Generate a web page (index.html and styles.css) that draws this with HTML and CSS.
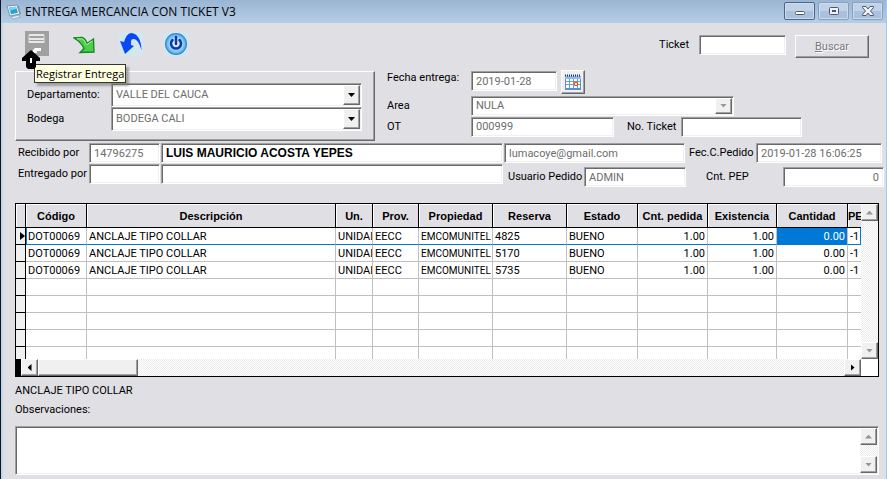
FILE: index.html
```html
<!DOCTYPE html>
<html lang="es">
<head>
<meta charset="utf-8">
<title>ENTREGA MERCANCIA CON TICKET V3</title>
<link rel="stylesheet" href="styles.css">
</head>
<body>
<div class="window">
  <header class="titlebar">
    <svg class="app-icon" width="16" height="16" viewBox="0 0 16 16"><path d="M1 2l10-1 3 9-10 2z" fill="#f4f9fc" stroke="#7894a5"/><path d="M3 3.500l7-.7 2 6-7 1.400z" fill="#24a1d8"/><path d="M3 3.500l7-.7.6 2-6.600 2z" fill="#79d4f2"/><path d="M5 13l8-2 1 2-7 2z" fill="#e9edf0" stroke="#7894a5" stroke-width=".6"/><path d="M11 1l2 1 2 8-1 1z" fill="#8097a6"/></svg>
    <h1 class="title">ENTREGA MERCANCIA CON TICKET V3</h1>
    <div class="caption-buttons">
      <button class="caption-button active" aria-label="Minimizar"><svg width="12" height="12" viewBox="0 0 12 12"><rect x="1.500" y="6.500" width="9" height="3" rx="1" fill="#fff" stroke="#535666"/></svg></button>
      <button class="caption-button" aria-label="Maximizar"><svg width="12" height="12" viewBox="0 0 12 12"><rect x="1.500" y="2.500" width="9" height="7" rx="1" fill="#eef2f6" stroke="#535666"/><rect x="4.500" y="5.500" width="3" height="1" fill="#b6cae0" stroke="#535666"/></svg></button>
      <button class="caption-button" aria-label="Cerrar"><svg width="12" height="12" viewBox="0 0 12 12"><path d="M.5 1.500h3.500l2 2.500 2-2.500h3.500v1L8.500 6l3 3.500v1H8L6 8l-2 2.500H.5v-1l3-3.500-3-3.500z" fill="#eef2f6" stroke="#535666"/></svg></button>
    </div>
  </header>

  <main class="content">
    <div class="toolbar">
      <div class="tools">
        <div class="tool-slot">
          <button class="tool" aria-label="Registrar Entrega"><svg width="24" height="25" viewBox="0 0 24 25"><path d="M0 0h24v25H0z" fill="#a0a0a0"/><path d="M4 4h15M4 8h15M4 11h15" stroke="#fff" stroke-width="1.500"/><path d="M4 4v8M19 4v8" stroke="#ddd"/><path d="M10 17h6v3h-4v2H8v-3z" fill="#fff"/></svg></button>
          <svg class="pointer" width="18" height="19" viewBox="0 0 18 19"><path d="M9 0l9 8v3h-4v6l-2 2H6l-2-2v-6H0V8z" fill="#000"/><path d="M8 8h2v5H8z" fill="#fff"/></svg>
          <span class="tooltip" role="tooltip">Registrar Entrega</span>
        </div>
        <button class="tool tool-next" aria-label="Continuar"><svg width="22" height="18" viewBox="0 0 22 18"><path d="M1 2l8-.5c3 .5 4 3 5 6l6.500-4.500.5 13-14 .500 4-4C9.500 9 6 5 1 2z" fill="#4ccf48" stroke="#108426" stroke-width="1.300"/><path d="M4 2.800h5c2.500.7 3 3.500 4.500 6l6-4" fill="none" stroke="#b6f5a0"/></svg></button>
        <button class="tool tool-undo" aria-label="Deshacer"><svg width="24" height="24" viewBox="0 0 24 24"><path d="M0 0h24v24H0z" fill="#d3e7ee"/><path d="M1 9l4 1C7 4 9 1 13 1c6 1 9.500 8 9.500 17-2-6-4-11-8-11-3 0-2.500 3-2.500 6l3 1-9 8z" fill="#0b48f5"/></svg></button>
        <button class="tool tool-power" aria-label="Salir"><svg width="24" height="24" viewBox="0 0 24 24"><defs><radialGradient id="orb"><stop offset="0" stop-color="#e5fbff"/><stop offset=".5" stop-color="#b1e3fa"/><stop offset=".8" stop-color="#69b9ef"/><stop offset="1" stop-color="#2277c8"/></radialGradient></defs><path d="M0 0h24v24H0z" fill="#d3e7ee"/><circle cx="12" cy="12" r="11" fill="url(#orb)"/><path d="M8.500 8a5 5 0 1 0 7 0M12 5v7" fill="none" stroke="#1236b0" stroke-width="2.500" stroke-linecap="round"/></svg></button>
      </div>
      <div class="search">
        <label for="ticket">Ticket</label>
        <input class="field w-search" id="ticket" type="text">
        <button class="push" disabled><u>B</u>uscar</button>
      </div>
    </div>

    <div class="order">
      <fieldset class="group">
        <div class="group-row">
          <label for="depto">Departamento:</label>
          <div class="combo tall"><select id="depto"><option>VALLE DEL CAUCA</option></select><span class="arrow-button down"></span></div>
        </div>
        <div class="group-row">
          <label for="bodega">Bodega</label>
          <div class="combo tall"><select id="bodega"><option>BODEGA CALI</option></select><span class="arrow-button down"></span></div>
        </div>
      </fieldset>
      <div class="details">
        <div class="detail-row first">
          <label for="fecha">Fecha entrega:</label>
          <input class="field w-date" id="fecha" type="text" value="2019-01-28">
          <button class="calendar" aria-label="Calendario"><svg width="16" height="16" viewBox="0 0 16 16"><path d="M0 2h16v14H0z" fill="#5c8fd0"/><path d="M0 2h16v3H0z" fill="#8fbcf0"/><path d="M1 5h14v9H1z" fill="#fff"/><path d="M4.500 5v9M8.500 5v9M12.500 5v9M1 7.500h14M1 10.500h14" stroke="#6f9ccb"/><path d="M0 1.500h16" stroke="#222c50" stroke-width="2" stroke-dasharray="1 1"/><path d="M9.500 8.500h3v3h-3z" fill="#fff" stroke="#ee4b18"/></svg></button>
        </div>
        <div class="detail-row">
          <label for="area">Area</label>
          <div class="combo w-area"><select id="area" disabled><option>NULA</option></select><span class="arrow-button down off"></span></div>
        </div>
        <div class="detail-row">
          <label for="ot">OT</label>
          <input class="field w-ot" id="ot" type="text" value="000999">
          <label class="ticket-label" for="noticket">No. Ticket</label>
          <input class="field w-ticket" id="noticket" type="text">
        </div>
      </div>
    </div>

    <div class="people">
      <div class="people-row">
        <label class="lead" for="recibido">Recibido por</label>
        <input class="field w-id" id="recibido" type="text" value="14796275">
        <input class="field person" type="text" aria-label="Nombre de quien recibe" value="LUIS MAURICIO ACOSTA YEPES">
        <input class="field w-mail" type="text" aria-label="Correo" value="lumacoye@gmail.com">
        <label class="order-date" for="fec">Fec.C.Pedido</label>
        <input class="field w-stamp" id="fec" type="text" value="2019-01-28 16:06:25">
      </div>
      <div class="people-row lower">
        <label class="lead" for="entregado">Entregado por</label>
        <input class="field w-id" id="entregado" type="text">
        <input class="field person" type="text" aria-label="Nombre de quien entrega">
        <div class="totals">
          <label class="user" for="usuario">Usuario Pedido</label>
          <input class="field w-user" id="usuario" type="text" value="ADMIN">
          <label class="pep" for="pep">Cnt. PEP</label>
          <input class="field w-pep" id="pep" type="text" value="0">
        </div>
      </div>
    </div>

    <div class="datagrid">
      <div class="viewport">
        <table>
          <colgroup><col class="c-mark"><col class="c-code"><col><col class="c-unit"><col class="c-prov"><col class="c-wide"><col class="c-wide"><col class="c-state"><col class="c-asked"><col class="c-stock"><col class="c-qty"><col class="c-pep"></colgroup>
          <thead><tr><th></th><th>Código</th><th>Descripción</th><th>Un.</th><th>Prov.</th><th>Propiedad</th><th>Reserva</th><th>Estado</th><th>Cnt. pedida</th><th>Existencia</th><th>Cantidad</th><th>PE</th></tr></thead>
          <tbody>
            <tr class="current"><td><i class="marker"></i></td><td>DOT00069</td><td>ANCLAJE TIPO COLLAR</td><td>UNIDAD</td><td>EECC</td><td class="owner">EMCOMUNITEL</td><td>4825</td><td>BUENO</td><td class="num">1.00</td><td class="num">1.00</td><td class="num selected">0.00</td><td>-1</td></tr>
            <tr><td></td><td>DOT00069</td><td>ANCLAJE TIPO COLLAR</td><td>UNIDAD</td><td>EECC</td><td class="owner">EMCOMUNITEL</td><td>5170</td><td>BUENO</td><td class="num">1.00</td><td class="num">1.00</td><td class="num">0.00</td><td>-1</td></tr>
            <tr><td></td><td>DOT00069</td><td>ANCLAJE TIPO COLLAR</td><td>UNIDAD</td><td>EECC</td><td class="owner">EMCOMUNITEL</td><td>5735</td><td>BUENO</td><td class="num">1.00</td><td class="num">1.00</td><td class="num">0.00</td><td>-1</td></tr>
            <tr><td></td><td></td><td></td><td></td><td></td><td></td><td></td><td></td><td></td><td></td><td></td><td></td></tr>
            <tr><td></td><td></td><td></td><td></td><td></td><td></td><td></td><td></td><td></td><td></td><td></td><td></td></tr>
            <tr><td></td><td></td><td></td><td></td><td></td><td></td><td></td><td></td><td></td><td></td><td></td><td></td></tr>
            <tr><td></td><td></td><td></td><td></td><td></td><td></td><td></td><td></td><td></td><td></td><td></td><td></td></tr>
            <tr><td></td><td></td><td></td><td></td><td></td><td></td><td></td><td></td><td></td><td></td><td></td><td></td></tr>
          </tbody>
        </table>
      </div>
      <div class="scroll-v"><span class="arrow-button up off"></span><span class="arrow-button down off"></span></div>
      <div class="scroll-h"><span class="arrow-button left"></span><span class="thumb"></span><span class="arrow-button right"></span></div>
    </div>

    <p class="item-name">ANCLAJE TIPO COLLAR</p>
    <label class="notes-label" for="obs">Observaciones:</label>
    <div class="notes">
      <textarea id="obs"></textarea>
      <div class="scroll-v"><span class="arrow-button up off"></span><span class="arrow-button down off"></span></div>
    </div>
  </main>
</div>
</body>
</html>
```
FILE: styles.css
```css
* { box-sizing: border-box; }

body {
  margin: 0;
  background: #e0dfe4;
  color: #000;
  font-family: Roboto, "Liberation Sans", sans-serif;
  font-size: 11px;
  line-height: 16px;
  overflow: hidden;
}

input, select, textarea, button {
  margin: 0;
  padding: 0;
  border: 0;
  border-radius: 0;
  color: #6d6d6d;
  background: #fff;
  font: inherit;
}

label { white-space: nowrap; }
svg { display: block; }

.window {
  min-height: 100vh;
  border-left: 1px solid #10161c;
  border-right: 1px solid #a9c6e4;
}

.titlebar {
  display: flex;
  align-items: center;
  gap: 3px;
  height: 23px;
  padding: 0 3px 0 5px;
  background: linear-gradient(#9ab5d2, #b5cde7);
}

.title {
  flex: 1;
  margin: 0;
  font: 12px/18px "Open Sans", sans-serif;
}

.caption-buttons {
  display: flex;
  align-self: flex-start;
  gap: 3px;
  padding-top: 2px;
}

.caption-button {
  display: grid;
  place-items: center;
  width: 31px;
  height: 18px;
  border: 1px solid #87a0bd;
  border-radius: 2px;
  background: linear-gradient(#bfd2e7 50%, #a9c1dc 50%);
  box-shadow: inset 0 0 0 1px #cbdcee;
}

.caption-button.active { border-color: #4e6484; }

.content {
  padding: 8px 0 4px 12px;
  border-left: 2px solid #bcd6ee;
}

.toolbar {
  display: flex;
  justify-content: space-between;
  height: 39px;
  padding: 0 17px 0 10px;
}

.tools {
  display: flex;
  align-items: flex-start;
}

.tool-slot { position: relative; }
.tool { background: none; }
.tool-next { margin: 5px 0 0 24px; }
.tool-undo { margin: 1px 0 0 24px; }
.tool-power { margin: 1px 0 0 21px; }

.pointer {
  position: absolute;
  z-index: 2;
  left: -3px;
  top: 19px;
}

.tooltip {
  position: absolute;
  z-index: 1;
  left: 9px;
  top: 33px;
  padding: 0 1px;
  border: 1px solid #333;
  background: #ffffe1;
  box-shadow: 3px 3px 2px #77777799;
  font: 11px/17px "Open Sans", sans-serif;
  white-space: nowrap;
}

.search {
  display: flex;
  align-items: flex-start;
  padding-top: 4px;
}

.search label { margin: 2px 10px 0 0; }

.field, .combo, .notes {
  height: 20px;
  border: 1px solid;
  border-color: #a0a0a0 #fff #fff #a0a0a0;
  background: #fff;
  box-shadow: inset 1px 1px #696969, inset -1px -1px #f0f0f0;
}

.field { padding: 0 4px; min-width: 0; }

.push {
  width: 74px;
  height: 23px;
  margin-left: 9px;
  color: #777;
  text-shadow: 1px 1px #fff;
}

.push, .calendar, .arrow-button, .thumb, .group {
  border: 1px solid;
  border-color: #fff #696969 #696969 #fff;
  background: #e0dfe4;
  box-shadow: inset -1px -1px #a0a0a0;
}

.order {
  display: flex;
  gap: 12px;
}

.group {
  display: flex;
  flex-direction: column;
  width: 360px;
  height: 70px;
  margin: 1px 0 0;
  padding: 11px 12px 0 11px;
}

.group-row {
  display: grid;
  grid-template-columns: 84px 1fr;
  align-items: center;
  height: 24px;
}

.combo {
  display: flex;
  padding: 1px;
}

.combo.tall { height: 24px; }

.combo select {
  flex: 1;
  min-width: 0;
  padding-left: 3px;
  appearance: none;
  opacity: 1;
}

.arrow-button, .thumb {
  display: grid;
  place-items: center;
  width: 17px;
  height: 17px;
  background: #f0f0f0;
}

.combo .arrow-button { height: 100%; }

.arrow-button::before {
  content: "";
  width: 7px;
  height: 4px;
  background: #000;
}

.arrow-button.down::before { clip-path: polygon(0 0, 100% 0, 50% 100%); }
.arrow-button.up::before { clip-path: polygon(0 100%, 100% 100%, 50% 0); }
.arrow-button.left::before, .arrow-button.right::before { width: 4px; height: 7px; }
.arrow-button.left::before { clip-path: polygon(100% 0, 100% 100%, 0 50%); }
.arrow-button.right::before { clip-path: polygon(0 0, 0 100%, 100% 50%); }
.arrow-button.off::before { background: #969696; }

.details { flex: 1; }

.detail-row {
  display: flex;
  align-items: center;
  height: 21px;
}

.detail-row.first { height: 25px; align-items: flex-start; }
.detail-row.first .field { margin-top: 1px; }
.detail-row label:first-child { width: 84px; }

.calendar {
  display: grid;
  place-items: center;
  width: 24px;
  height: 24px;
  margin-left: 4px;
  background: #f0f0f0;
}

.ticket-label { width: 54px; margin-left: 13px; }

.w-search { width: 87px; }
.w-date { width: 86px; }
.w-area { width: 263px; }
.w-ot { width: 143px; }
.w-ticket { width: 121px; }
.w-id { width: 71px; }
.w-mail { width: 181px; }
.w-stamp { width: 126px; }
.w-user { width: 102px; }
.w-pep { width: 101px; text-align: right; }

.people { padding-top: 2px; }

.people-row {
  display: flex;
  gap: 1px;
  height: 21px;
  padding-right: 4px;
}

.people-row.lower { height: 24px; padding-right: 2px; }
.lead { width: 73px; padding: 2px 0 0 3px; }

.person {
  flex: 1;
  color: #000;
  font: bold 12px/16px "Liberation Sans", sans-serif;
}

.order-date { width: 69px; padding: 2px 0 0 3px; }

.totals {
  display: flex;
  padding-top: 3px;
}

.user { width: 80px; padding: 2px 0 0 4px; }
.pep { width: 97px; padding: 2px 0 0 20px; }

.datagrid {
  display: grid;
  grid-template-columns: 1fr 17px;
  grid-template-rows: 155px 17px;
  margin: 15px 7px 0 0;
  border: 1px solid #000;
  background: #fff;
  color: #000;
}

.viewport { overflow: hidden; }

table {
  width: 100%;
  table-layout: fixed;
  border-collapse: separate;
  border-spacing: 0;
}

.c-mark { width: 10px; }
.c-code { width: 61px; }
.c-unit { width: 37px; }
.c-prov { width: 46px; }
.c-wide { width: 74px; }
.c-state { width: 71px; }
.c-asked { width: 70px; }
.c-stock { width: 69px; }
.c-qty { width: 71px; }
.c-pep { width: 13px; }

th {
  height: 24px;
  padding: 0;
  border-right: 1px solid #000;
  border-bottom: 1px solid #000;
  background: #e0dfe4;
  box-shadow: inset 1px 1px #fff;
  font: bold 11px/16px "Liberation Sans", sans-serif;
  overflow: hidden;
  white-space: nowrap;
}

td {
  height: 17px;
  padding: 2px 0 0 2px;
  border-right: 1px solid #c0c0c0;
  border-bottom: 1px solid #c0c0c0;
  line-height: 14px;
  overflow: hidden;
  white-space: nowrap;
}

td:first-child {
  padding: 0;
  border-color: #000;
  background: #f0f0f0;
}

td:last-child, th:last-child { border-right: 0; }
.current td + td { border-bottom-color: #0078d7; }
.current td:nth-child(2) { box-shadow: inset 1px 0 #0078d7; }
.current td:last-child { border-right: 1px solid #0078d7; }
.owner { font-size: 10px; }
td.num { padding-right: 2px; text-align: right; }
.selected { background: #0078d7; color: #fff; }

.marker {
  display: block;
  width: 5px;
  height: 8px;
  margin-left: 4px;
  background: #000;
  clip-path: polygon(0 0, 100% 50%, 0 100%);
}

.scroll-v, .scroll-h {
  display: flex;
  background: repeating-conic-gradient(#fff 0 25%, #ebebeb 0 50%) 0 0 / 2px 2px;
}

.scroll-v { flex-direction: column; justify-content: space-between; }
.scroll-h { border-left: 5px solid #000; }
.scroll-h .thumb { width: 100px; margin-right: auto; }

.item-name { margin: 6px 0 3px; }
.notes-label { display: block; }

.notes {
  display: flex;
  height: 49px;
  margin: 8px 7px 0 0;
  padding: 1px;
}

.notes textarea {
  flex: 1;
  resize: none;
  outline: 0;
}
```
